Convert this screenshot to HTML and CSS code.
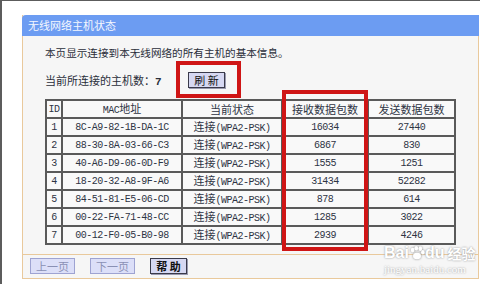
FILE: index.html
```html
<!DOCTYPE html>
<html lang="zh-CN">
<head>
    <meta charset="UTF-8">
    <title>无线网络主机状态</title>
    <link rel="stylesheet" href="styles.css">
</head>
<body>
    <div class="frame">
        <div class="panel">
            <div class="panel-header">无线网络主机状态</div>
            <div class="panel-body">
                <p class="intro">本页显示连接到本无线网络的所有主机的基本信息。</p>
                <div class="count-row">
                    <span class="count-label">当前所连接的主机数：<b class="mono">7</b></span>
                    <button class="btn btn-refresh">刷 新</button>
                </div>

                <table class="host-table">
                    <colgroup>
                        <col class="c-id">
                        <col class="c-mac">
                        <col class="c-state">
                        <col class="c-rx">
                        <col class="c-tx">
                    </colgroup>
                    <thead>
                        <tr>
                            <th class="mono">ID</th>
                            <th><span class="mono">MAC</span>地址</th>
                            <th>当前状态</th>
                            <th>接收数据包数</th>
                            <th>发送数据包数</th>
                        </tr>
                    </thead>
                    <tbody>
                        <tr><td class="mono">1</td><td class="mono">8C-A9-82-1B-DA-1C</td><td>连接<span class="mono">(WPA2-PSK)</span></td><td class="mono">16034</td><td class="mono">27440</td></tr>
                        <tr><td class="mono">2</td><td class="mono">88-30-8A-03-66-C3</td><td>连接<span class="mono">(WPA2-PSK)</span></td><td class="mono">6867</td><td class="mono">830</td></tr>
                        <tr><td class="mono">3</td><td class="mono">40-A6-D9-06-0D-F9</td><td>连接<span class="mono">(WPA2-PSK)</span></td><td class="mono">1555</td><td class="mono">1251</td></tr>
                        <tr><td class="mono">4</td><td class="mono">18-20-32-A8-9F-A6</td><td>连接<span class="mono">(WPA2-PSK)</span></td><td class="mono">31434</td><td class="mono">52282</td></tr>
                        <tr><td class="mono">5</td><td class="mono">84-51-81-E5-06-CD</td><td>连接<span class="mono">(WPA2-PSK)</span></td><td class="mono">878</td><td class="mono">614</td></tr>
                        <tr><td class="mono">6</td><td class="mono">00-22-FA-71-48-CC</td><td>连接<span class="mono">(WPA2-PSK)</span></td><td class="mono">1285</td><td class="mono">3022</td></tr>
                        <tr><td class="mono">7</td><td class="mono">00-12-F0-05-B0-98</td><td>连接<span class="mono">(WPA2-PSK)</span></td><td class="mono">2939</td><td class="mono">4246</td></tr>
                    </tbody>
                </table>
            </div>
            <div class="panel-footer">
                <button class="btn btn-disabled">上一页</button>
                <button class="btn btn-disabled">下一页</button>
                <button class="btn btn-help">帮 助</button>
            </div>
        </div>

        <!-- 标注框 -->
        <div class="mark mark-refresh"></div>
        <div class="mark mark-rx"></div>

        <!-- 水印 -->
        <div class="watermark">
            <div class="wm-logo">
                <span>Bai</span>
                <svg class="wm-paw" width="16" height="16" viewBox="0 0 22 20">
                    <ellipse cx="5" cy="6" rx="2.6" ry="3.2"/>
                    <ellipse cx="10" cy="3.5" rx="2.6" ry="3.2"/>
                    <ellipse cx="15.5" cy="4" rx="2.6" ry="3.2"/>
                    <ellipse cx="19" cy="9" rx="2.4" ry="3"/>
                    <ellipse cx="11" cy="14" rx="5.5" ry="4.5"/>
                </svg>
                <span>du</span>
                <span class="wm-cn">经验</span>
            </div>
            <div class="wm-url">jingyan.baidu.com</div>
        </div>
    </div>
</body>
</html>
```

FILE: styles.css
```css
* {
    margin: 0;
    padding: 0;
    box-sizing: border-box;
}

body {
    background-color: #ffffff;
    font-family: 'Noto Sans CJK SC', sans-serif;
    font-size: 11px;
    color: #2e3340;
}

.mono {
    font-family: 'Liberation Mono', monospace;
    font-size: 10px;
    letter-spacing: -0.5px;
}

.frame {
    position: relative;
    width: 480px;
    height: 284px;
    border-top: 1px solid #5c5c5c;
    border-left: 2px solid #5c5c5c;
    padding: 14px 0 0 20px;
}

.panel {
    width: 457px;
    background-color: #f6f6f6;
    border: 1px solid #e9c99c;
    border-top: none;
}

.panel-header {
    height: 21px;
    margin: 0 -1px;
    padding-left: 6px;
    background-color: #6c9cf2;
    border-radius: 4px 0 0 0;
    color: #f4f7ff;
    font-size: 11px;
    line-height: 21px;
}

.panel-body {
    padding: 10px 0 10px 22px;
    height: 218px;
}

.intro {
    height: 14px;
    line-height: 14px;
    font-size: 10.6px;
    color: #2a2e3a;
}

.count-row {
    display: flex;
    align-items: center;
    height: 16px;
    margin-top: 12px;
}

.count-label {
    width: 143px;
    font-size: 11px;
    color: #2a2e3a;
}

.count-label b {
    font-size: 11px;
    font-weight: 700;
}

.btn {
    height: 16px;
    padding: 0 6px;
    font-family: 'Noto Sans CJK SC', sans-serif;
    font-size: 11px;
    line-height: 14px;
    background-color: #d6d8f2;
    border: 1px solid #3a3a4a;
    box-shadow: 1px 1px 0 #9a9ab0;
    color: #111111;
}

.btn-refresh {
    width: 37px;
    padding: 0;
}

.host-table {
    width: 409px;
    margin-top: 11px;
    table-layout: fixed;
    border-collapse: collapse;
    background-color: #f9f9f9;
}

.c-id { width: 16px; }
.c-mac { width: 120px; }
.c-state { width: 100px; }
.c-rx { width: 86px; }
.c-tx { width: 87px; }

.host-table tr {
    height: 18px;
}

.host-table th,
.host-table td {
    height: 16px;
    padding: 0;
    border: 2px solid #5a5a5a;
    text-align: center;
    font-weight: 400;
    white-space: nowrap;
    overflow: hidden;
    line-height: 13px;
    color: #2e3444;
}

.host-table th {
    font-size: 11px;
}

.host-table td {
    font-size: 11px;
}

.host-table td.mono,
.host-table th.mono {
    font-size: 10px;
}

.panel-footer {
    display: flex;
    gap: 15px;
    height: 24px;
    padding: 3px 0 0 7px;
    border-top: 1px solid #e9c99c;
}

.btn-disabled {
    width: 45px;
    padding: 0;
    background-color: #dcdff8;
    border-color: #9ea3d2;
    box-shadow: none;
    color: #8a90b4;
}

.btn-help {
    width: 37px;
    padding: 0;
    font-weight: 700;
}

.mark {
    position: absolute;
    border: 4px solid #cf1515;
}

.mark-refresh {
    left: 174px;
    top: 60px;
    width: 65px;
    height: 37px;
}

.mark-rx {
    left: 280px;
    top: 89px;
    width: 86px;
    height: 161px;
}

.watermark {
    position: absolute;
    left: 382px;
    top: 243px;
    width: 96px;
    white-space: nowrap;
    color: #ffffff;
    text-shadow: 0 0 2px #8a8a8a;
}

.wm-logo {
    display: flex;
    align-items: flex-end;
    height: 18px;
    font-family: 'Liberation Sans', sans-serif;
    font-size: 16px;
    font-weight: 700;
    line-height: 18px;
}

.wm-paw {
    margin-bottom: 1px;
    fill: #ffffff;
    filter: drop-shadow(0 0 1px #8a8a8a);
}

.wm-cn {
    margin-left: 3px;
    font-family: 'Noto Sans CJK SC', sans-serif;
    font-size: 14px;
}

.wm-url {
    font-family: 'Liberation Serif', serif;
    font-size: 11px;
    line-height: 14px;
}
```
